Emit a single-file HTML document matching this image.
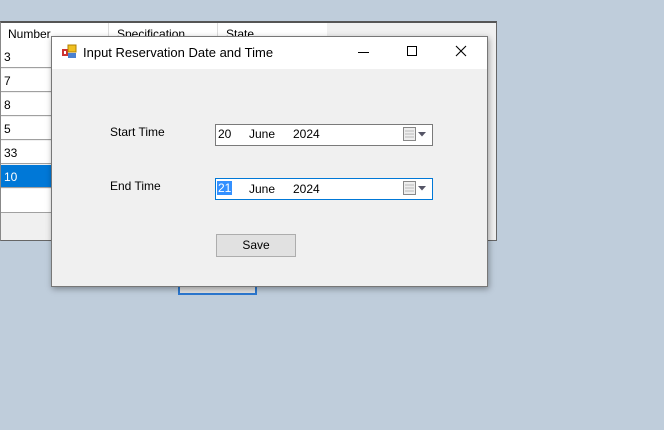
<!DOCTYPE html>
<html><head><style>
body{margin:0;width:664px;height:430px;background:#bfcddb;position:relative;overflow:hidden;font-family:"Liberation Sans",sans-serif;font-size:12px;color:#000}
.a{position:absolute}
.row{position:absolute;left:1px;width:326px;height:23px;background:#fff;border-bottom:1px solid #a0a0a0;box-sizing:border-box;padding:5px 0 0 3px}
</style></head><body>
<div class="a" style="left:0;top:21px;width:497px;height:220px;background:#f0f0f0;border-top:2px solid #555;border-right:1px solid #666;border-bottom:1px solid #666;box-sizing:border-box;border-left:1px solid #888"></div>
<div class="a" style="left:1px;top:23px;width:326px;height:22px;background:#fff;border-bottom:1px solid #ddd"></div>
<div class="a" style="left:8px;top:27px">Number</div>
<div class="a" style="left:108px;top:23px;width:1px;height:22px;background:#ddd"></div>
<div class="a" style="left:117px;top:27px">Specification</div>
<div class="a" style="left:217px;top:23px;width:1px;height:22px;background:#ddd"></div>
<div class="a" style="left:226px;top:27px">State</div>
<div class="row" style="top:45px">3</div>
<div class="row" style="top:69px">7</div>
<div class="row" style="top:93px">8</div>
<div class="row" style="top:117px">5</div>
<div class="row" style="top:141px">33</div>
<div class="row" style="top:165px;background:#0078d7;color:#fff">10</div>
<div class="row" style="top:189px;height:24px"></div>
<div class="a" style="left:178px;top:280px;width:79px;height:15px;border:2px solid #2b78d0;background:#e1e1e1;box-sizing:border-box"></div>
<div class="a" style="left:51px;top:36px;width:437px;height:251px;background:#f0f0f0;border:1px solid #777;box-sizing:border-box;box-shadow:1px 2px 6px rgba(0,0,0,.35)"></div>
<div class="a" style="left:52px;top:37px;width:435px;height:32px;background:#fff"></div>
<svg class="a" style="left:61px;top:44px" width="16" height="16"><rect x="1" y="5" width="6" height="7" fill="#c33"/><rect x="3" y="7" width="2" height="3" fill="#fff"/><rect x="7" y="1" width="8" height="7" fill="#f0c020" stroke="#b08000"/><rect x="7" y="9" width="8" height="5" fill="#4a80d0"/></svg>
<div class="a" style="left:83px;top:45px;font-size:13px">Input Reservation Date and Time</div>
<div class="a" style="left:358px;top:52px;width:11px;height:1px;background:#000"></div>
<div class="a" style="left:407px;top:46px;width:8px;height:8px;border:1px solid #000"></div>
<svg class="a" style="left:455px;top:45px" width="12" height="12"><path d="M1 1L11 11M11 1L1 11" stroke="#000" stroke-width="1.1"/></svg>
<div class="a" style="left:110px;top:125px">Start Time</div>
<div class="a" style="left:110px;top:179px">End Time</div>
<div class="a" style="left:215px;top:124px;width:218px;height:22px;background:#fff;border:1px solid #7a7a7a;box-sizing:border-box"></div>
<div class="a" style="left:215px;top:178px;width:218px;height:22px;background:#fff;border:1px solid #0078d7;box-sizing:border-box"></div>
<div class="a" style="left:218px;top:127px">20</div><div class="a" style="left:249px;top:127px">June</div><div class="a" style="left:293px;top:127px">2024</div>
<div class="a" style="left:217px;top:181px;background:#3390ff;color:#fff;padding:0 1px">21</div><div class="a" style="left:249px;top:182px">June</div><div class="a" style="left:293px;top:182px">2024</div>
<svg class="a" style="left:402px;top:126px" width="28" height="17"><rect x="1.5" y="1.5" width="12" height="13" fill="#eee" stroke="#888"/><path d="M3 5h9M3 8h9M3 11h9" stroke="#bbb"/><path d="M16 6h8l-4 4.5z" fill="#556"/></svg>
<svg class="a" style="left:402px;top:180px" width="28" height="17"><rect x="1.5" y="1.5" width="12" height="13" fill="#eee" stroke="#888"/><path d="M3 5h9M3 8h9M3 11h9" stroke="#bbb"/><path d="M16 6h8l-4 4.5z" fill="#556"/></svg>
<div class="a" style="left:216px;top:234px;width:80px;height:23px;background:#e1e1e1;border:1px solid #adadad;box-sizing:border-box;text-align:center;line-height:21px">Save</div>
</body></html>
